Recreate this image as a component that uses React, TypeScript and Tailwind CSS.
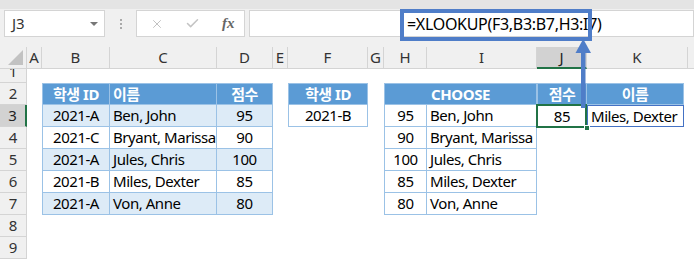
import { Check, X } from 'lucide-react'

const COLS = ['A', 'B', 'C', 'D', 'E', 'F', 'G', 'H', 'I', 'J', 'K']

const values: Record<string, string> = {
  B2: '학생 ID', C2: '이름', D2: '점수',
  B3: '2021-A', C3: 'Ben, John', D3: '95',
  B4: '2021-C', C4: 'Bryant, Marissa', D4: '90',
  B5: '2021-A', C5: 'Jules, Chris', D5: '100',
  B6: '2021-B', C6: 'Miles, Dexter', D6: '85',
  B7: '2021-A', C7: 'Von, Anne', D7: '80',
  F2: '학생 ID', F3: '2021-B',
  H2: 'CHOOSE',
  H3: '95', I3: 'Ben, John',
  H4: '90', I4: 'Bryant, Marissa',
  H5: '100', I5: 'Jules, Chris',
  H6: '85', I6: 'Miles, Dexter',
  H7: '80', I7: 'Von, Anne',
  J2: '점수', K2: '이름', J3: '85', K3: 'Miles, Dexter',
}

const HEADERS = ['B2', 'C2', 'D2', 'F2', 'H2', 'J2', 'K2']
const FIRST = ['B', 'F', 'H', 'J']

// classes for one worksheet cell
function cellClass(col: string, row: number) {
  const key = col + row
  const left = col === 'C' || col === 'I' || key === 'K3'
  let cls = left ? 'justify-start pl-[3px]' : 'justify-center'

  if (HEADERS.includes(key)) {
    cls += ' bg-[#5b9bd5] text-white font-bold border-t border-b border-r border-[#9bc2e6]'
    if (FIRST.includes(col)) cls += ' border-l'
    if (col === 'K') cls += ' mr-[4px]'
    if (col === 'H') cls += ' col-span-2'
    return cls
  }
  if (row >= 3 && row <= 7 && ['B', 'C', 'D'].includes(col)) {
    cls += row % 2 === 1 ? ' bg-[#ddebf7]' : ' bg-white'
    cls += ' border-b border-r border-[#9bc2e6]'
    if (col === 'B') cls += ' border-l'
    return cls
  }
  if (key === 'F3') return cls + ' bg-white border-b border-r border-l border-[#9bc2e6]'
  if (row >= 3 && row <= 7 && (col === 'H' || col === 'I')) {
    cls += ' bg-white border-b border-r border-[#9bc2e6]'
    if (col === 'H') cls += ' border-l'
    return cls
  }
  if (key === 'J3') return cls + ' bg-white relative'
  if (key === 'K3') return cls + ' bg-white border border-[#4472c4] mr-[4px]'
  return cls + ' bg-white'
}

function RowCells({ row }: { row: number }) {
  const out = []
  for (const col of COLS) {
    if (col === 'I' && row === 2) continue
    const key = col + row
    out.push(
      <div key={key} className={'flex items-center whitespace-nowrap tracking-[-0.45px] ' + cellClass(col, row)}>
        {values[key]}
        {key === 'J3' && (
          <>
            <div className="absolute -bottom-[1px] -left-[1px] -top-[1px] right-0 border-2 border-[#217346]" />
            <div className="absolute -bottom-[4px] -right-[3px] h-[6px] w-[6px] border border-white bg-[#217346]" />
          </>
        )}
      </div>
    )
  }
  out.push(<div key={'z' + row} className="bg-white" />)
  return <>{out}</>
}

function RowCellsRow({ row }: { row: number }) {
  const head =
    row === 3
      ? 'flex items-center justify-center border-b border-r-2 border-b-[#d4d4d4] border-r-[#217346] bg-[#d2d2d2] text-[#222]'
      : 'flex items-center justify-center border-b border-r border-[#d4d4d4] bg-[#f0f0f0] text-[#333]'
  if (row === 1) {
    return (
      <>
        <div className="flex flex-col justify-end overflow-hidden border-b border-r border-[#d4d4d4] bg-[#f0f0f0] text-[#333]">
          <div className="flex h-[22px] shrink-0 items-center justify-center">1</div>
        </div>
        {COLS.map((c) => (
          <div key={c} className="bg-white" />
        ))}
        <div className="bg-white" />
      </>
    )
  }
  return (
    <>
      <div className={head}>{row}</div>
      <RowCells row={row} />
    </>
  )
}

export default function App() {
  return (
    <div className="relative h-[260px] w-[694px] overflow-hidden bg-white font-['Noto_Sans','Noto_Sans_CJK_KR',sans-serif] text-[15px] text-black">
      {/* formula bar */}
      <div className="h-[47px] bg-[#f0f0f0]">
        <div className="h-[9px] bg-[#e4e4e4]" />
        <div className="flex pt-[1px]">
          <div className="ml-[4px] flex h-[27px] w-[101px] items-center justify-between border border-[#d4d4d4] bg-white pl-[7px] pr-[6px] text-[#333]">
            <span>J3</span>
            <span className="h-0 w-0 border-x-[4px] border-t-[4px] border-x-transparent border-t-[#777]" />
          </div>
          <div className="flex w-[31px] flex-col items-center justify-center gap-[2px]">
            <span className="h-[2px] w-[2px] bg-[#aaa]" />
            <span className="h-[2px] w-[2px] bg-[#aaa]" />
            <span className="h-[2px] w-[2px] bg-[#aaa]" />
          </div>
          <div className="flex h-[27px] w-[109px] items-center border border-[#d4d4d4] bg-white pl-[13px]">
            <X size={14} strokeWidth={1.6} className="text-[#bdbdbd]" />
            <Check size={15} strokeWidth={2.4} className="ml-[21px] text-[#c4c4c4]" />
            <span className="ml-[22px] font-['Liberation_Serif',serif] text-[15px] font-bold italic text-[#666]">fx</span>
          </div>
          <div className="ml-[4px] flex h-[27px] flex-1 items-center whitespace-nowrap border border-[#d4d4d4] bg-white pl-[157px] text-[16px] tracking-[-0.3px]">
            =XLOOKUP(F3,B3:B7,H3:I7)
          </div>
        </div>
      </div>

      {/* sheet */}
      <div className="grid grid-cols-[27px_15px_68px_107px_56px_15px_80px_16px_43px_110px_50px_101px_1fr] grid-rows-[22px_14px_repeat(8,22px)]">
        <div className="relative border-b border-r border-[#d4d4d4] bg-[#f0f0f0]">
          <svg className="absolute bottom-[3px] right-[3px]" width="15" height="15" viewBox="0 0 15 15">
            <polygon points="15,0 15,15 0,15" fill="#c2c2c2" />
          </svg>
        </div>
        {COLS.map((c) => (
          <div
            key={c}
            className={
              c === 'J'
                ? 'flex items-center justify-center border-b-2 border-r border-b-[#217346] border-r-[#d4d4d4] bg-[#d2d2d2] text-[#222]'
                : 'flex items-center justify-center border-b border-r border-[#d4d4d4] bg-[#f0f0f0] text-[#333]'
            }
          >
            {c}
          </div>
        ))}
        <div className="border-b border-[#d4d4d4] bg-[#f0f0f0]" />

        {[1, 2, 3, 4, 5, 6, 7, 8, 9].map((r) => (
          <RowCellsRow key={r} row={r} />
        ))}
      </div>

      {/* formula highlight + arrow */}
      <div className="absolute left-[400px] top-[9px] h-[32px] w-[192px] border-[4px] border-[#4f7dc8]" />
      <svg className="absolute left-[574px] top-[38px]" width="20" height="72" viewBox="0 0 20 72">
        <rect x="7" y="14" width="4.5" height="56" fill="#4f7dc8" />
        <polygon points="9.2,1 1.5,15 17,15" fill="#4f7dc8" />
      </svg>
    </div>
  )
}
